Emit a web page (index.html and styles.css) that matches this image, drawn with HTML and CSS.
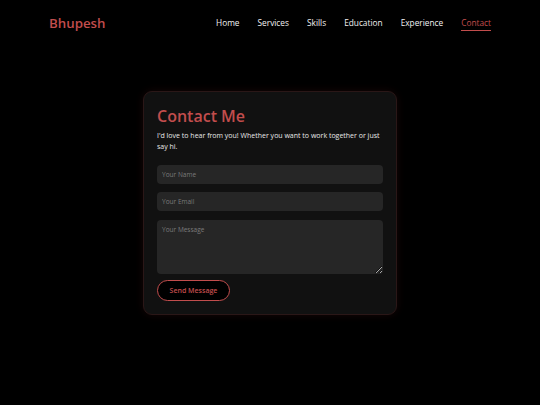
FILE: index.html
```html
<!DOCTYPE html>
<html lang="en">
<head>
<meta charset="utf-8">
<title>Bhupesh - Contact</title>
<link rel="stylesheet" href="styles.css">
</head>
<body>
<header class="site-header">
  <a class="logo" href="#">Bhupesh</a>
  <nav class="nav">
    <a href="#">Home</a>
    <a href="#">Services</a>
    <a href="#">Skills</a>
    <a href="#">Education</a>
    <a href="#">Experience</a>
    <a href="#" class="active">Contact</a>
  </nav>
</header>
<main class="main">
  <section class="card">
    <h1 class="title">Contact Me</h1>
    <p class="intro">I'd love to hear from you! Whether you want to work together or just say hi.</p>
    <form class="form">
      <input class="field" type="text" placeholder="Your Name">
      <input class="field" type="email" placeholder="Your Email">
      <textarea class="field message" placeholder="Your Message"></textarea>
      <button class="btn" type="button">Send Message</button>
    </form>
  </section>
</main>
</body>
</html>
```

FILE: styles.css
```css
* { box-sizing: border-box; }
html, body { margin: 0; padding: 0; }
body {
  background: #000;
  color: #eee;
  font-family: "Open Sans", "Noto Sans", sans-serif;
  height: 405px;
  overflow: hidden;
}
.site-header {
  height: 45px;
  display: flex;
  align-items: center;
  justify-content: space-between;
  padding: 0 49px;
}
.logo {
  color: #c24d4d;
  font-size: 13.3px;
  font-weight: 600;
  text-decoration: none;
}
.nav {
  display: flex;
  gap: 18px;
}
.nav a {
  color: #f2f2f2;
  font-size: 8.3px;
  font-weight: 500;
  text-decoration: none;
  padding: 2px 0;
  border-bottom: 1px solid transparent;
}
.nav a.active {
  color: #c24d4d;
  border-bottom-color: #c24d4d;
}
.main {
  display: flex;
  justify-content: center;
  padding-top: 46px;
}
.card {
  width: 254px;
  background: #111;
  border: 1px solid #2a1717;
  border-radius: 9px;
  padding: 13px 13px 13px;
  box-shadow: 0 0 8px rgba(150, 40, 40, 0.15);
}
.title {
  margin: 0;
  color: #c24d4d;
  font-size: 16px;
  font-weight: 600;
  line-height: 22px;
}
.intro {
  margin: 4px 0 13px;
  font-size: 7px;
  line-height: 10.5px;
  color: #e8e8e8;
}
.form {
  display: flex;
  flex-direction: column;
  gap: 8.7px;
}
.field {
  display: block;
  width: 100%;
  height: 18.6px;
  background: #262626;
  border: none;
  border-radius: 4px;
  padding: 0 5px;
  color: #ddd;
  font-family: inherit;
  font-size: 6.5px;
  outline: none;
}
.field::placeholder { color: #7a7a7a; }
.message {
  height: 54.7px;
  padding: 5px;
  resize: vertical;
}
.btn {
  align-self: flex-start;
  margin-top: -2.7px;
  width: 73px;
  height: 21px;
  background: #000;
  border: 1px solid #c24d4d;
  border-radius: 11px;
  color: #c24d4d;
  font-family: inherit;
  font-size: 7px;
  font-weight: 600;
  padding: 0;
  cursor: pointer;
}
```
